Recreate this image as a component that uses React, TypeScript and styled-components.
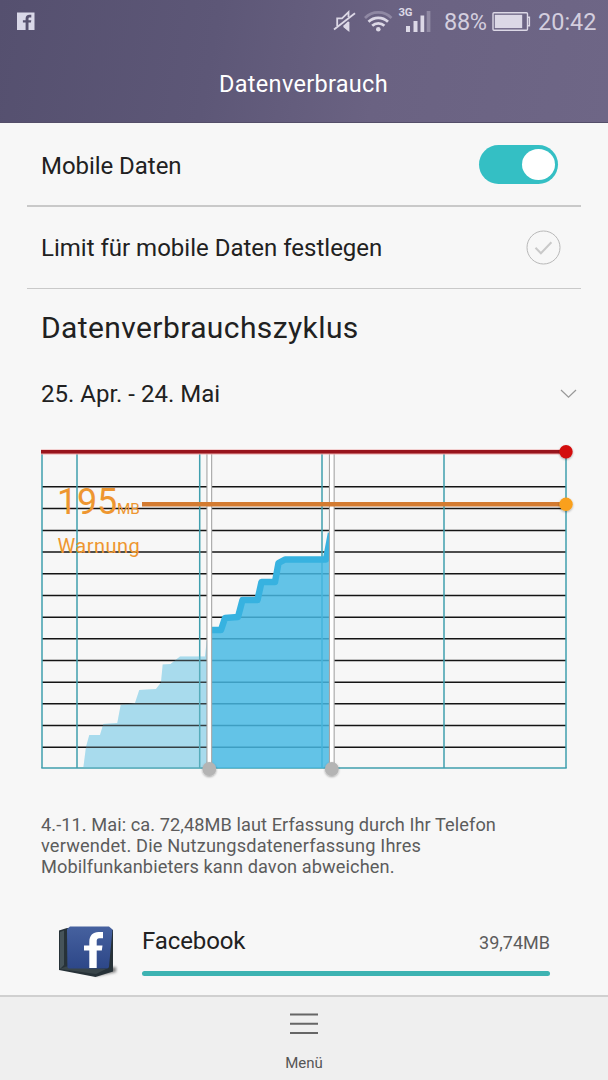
import React from 'react';
import styled, { createGlobalStyle } from 'styled-components';

const Global = createGlobalStyle`
  * { box-sizing: border-box; }
  html, body { margin: 0; padding: 0; background: #f7f7f7; }
  body { font-family: Roboto, "Liberation Sans", sans-serif; color: #212121; }
`;

const Screen = styled.div`
  width: 608px;
  height: 1080px;
  display: flex;
  flex-direction: column;
  overflow: hidden;
  background: #f7f7f7;
`;

const Header = styled.header`
  height: 123px;
  flex: none;
  color: #fff;
  background: linear-gradient(100deg, #55506f 0%, #5d5777 35%, #6a6282 62%, #6e6686 100%);
  border-bottom: 1px solid #544e69;
`;

const StatusBar = styled.div`
  height: 44px;
  display: flex;
  align-items: flex-start;
  justify-content: space-between;
`;

const StatusGroup = styled.div`
  display: flex;
  height: 44px;
`;

const StatusText = styled.span<{ $spacing?: number; $w: number }>`
  width: ${(p) => p.$w}px;
  font-size: 23.5px;
  line-height: 28px;
  padding-top: 8px;
  font-weight: 400;
  letter-spacing: ${(p) => p.$spacing ?? 0}px;
  color: #d3cede;
  white-space: nowrap;
`;

const Title = styled.h1`
  margin: 0;
  height: 78px;
  line-height: 80px;
  text-align: center;
  font-size: 23.5px;
  font-weight: 400;
  letter-spacing: 0.3px;
  padding-right: 1px;
`;

const Row = styled.div<{ $h: number; $line: number }>`
  height: ${(p) => p.$h}px;
  flex: none;
  margin: 0 27px;
  padding: 0 20px 0 14px;
  display: flex;
  align-items: center;
  justify-content: space-between;
  border-bottom: ${(p) => p.$line}px solid #c9c9c9;
`;

const Label = styled.span<{ $spacing?: number; $drop?: number }>`
  font-size: 24px;
  line-height: 28px;
  margin-top: ${(p) => p.$drop ?? 0}px;
  letter-spacing: ${(p) => p.$spacing ?? 0}px;
  white-space: nowrap;
`;

const Toggle = styled.div`
  width: 79px;
  height: 39px;
  margin-right: 3px;
  border-radius: 20px;
  padding: 3px;
  background: #34bfc4;
  display: flex;
  justify-content: flex-end;
  align-items: center;
`;

const Knob = styled.div`
  width: 33px;
  height: 31px;
  border-radius: 50%;
  background: #fff;
`;

const Heading = styled.h2`
  margin: 0;
  height: 76px;
  flex: none;
  padding: 21px 0 0 41px;
  font-size: 30px;
  line-height: 36px;
  font-weight: 400;
  letter-spacing: 0.4px;
`;

const Cycle = styled.div`
  height: 58px;
  flex: none;
  padding: 0 31px 0 41px;
  display: flex;
  align-items: center;
  justify-content: space-between;
`;

const Chart = styled.svg`
  display: block;
  flex: none;
  margin-top: 11px;
  font-family: Roboto, "Liberation Sans", sans-serif;
`;

const Summary = styled.p`
  margin: 0;
  height: 118px;
  flex: none;
  padding: 19px 0 0 41px;
  font-size: 18.2px;
  line-height: 21px;
  color: #5c5c5c;
  white-space: nowrap;
`;

const SummaryLine = styled.span<{ $spacing: number }>`
  display: block;
  letter-spacing: ${(p) => p.$spacing}px;
`;

const AppRow = styled.div`
  height: 82px;
  flex: none;
  display: flex;
  align-items: flex-start;
  padding: 0 58px 0 55px;
`;

const AppIcon = styled.svg`
  display: block;
  flex: none;
  margin-top: 7px;
`;

const AppInfo = styled.div`
  flex: 1;
  margin-left: 19px;
`;

const AppLine = styled.div`
  height: 58px;
  padding-top: 14px;
  display: flex;
  justify-content: space-between;
  align-items: baseline;
`;

const AppSize = styled.span`
  font-size: 18px;
  color: #5c5c5c;
`;

const UsageBar = styled.div`
  height: 5px;
  border-radius: 3px;
  background: #3db3b2;
`;

const Footer = styled.footer`
  flex: 1;
  display: flex;
  flex-direction: column;
  align-items: center;
  border-top: 2px solid #d0d0d0;
  background: #efefef;
  color: #555;
  font-size: 15px;
`;

const FooterLabel = styled.span`
  margin-top: 19px;
  line-height: 18px;
`;

const hLines = [486.7, 508.5, 530.5, 552, 573.7, 595.5, 617.3, 638.7, 660.5, 682.3, 703.7, 725.5, 747.3];
const vLines = [42, 77, 199.7, 322, 444, 566];
const earlierPath =
  'M83.3 768L86 747L89.3 735H100L103.3 724L117.3 723L120.7 705L135 703L139.3 690L156 689L161 682.5L162.7 664.5L170.5 664L180 656.5H205L206.7 641H209V768Z';
const selectedPath =
  'M208 630 L221 630 L225 618 L238 617 L242.5 600 L257.5 600 L261.5 582 L275 582 L278.5 563 L285 559.5 L326 559.5 L331 533';

function NotificationIcon() {
  return (
    <svg width="60" height="44" viewBox="0 0 60 44">
      <rect x="17" y="12.5" width="17.5" height="17.5" fill="#d9d8e8" />
      <path d="M25.6 30v-7.4h-2.7v-2.4h2.7v-1.4c0-2.8 1.5-4.1 3.8-4.1h1.9v2.8h-1.4c-1.1 0-1.4.5-1.4 1.4v1.3h2.8l-.4 2.4h-2.4V30z" fill="#57526f" />
    </svg>
  );
}

function SignalIcons() {
  return (
    <svg width="114" height="44" viewBox="330 0 114 44" fontFamily="Roboto, sans-serif">
      <g fill="none" stroke="#dcd8e6" strokeWidth="1.8">
        <path d="M334 29.5L355 13.2" />
        <path d="M337.2 26V18.4H342L348.5 12.2V17M348.5 22V30L343.8 26.2" />
      </g>
      <path d="M343 26l5.5-5v10z" fill="#dcd8e6" />
      <g fill="none" strokeWidth="2.7">
        <path d="M365 18a18.5 18.5 0 0 1 26.5 0" stroke="#8f88a3" />
        <path d="M368.5 21.8a14 14 0 0 1 19.5 0" stroke="#dcd8e6" />
        <path d="M372.2 25.8a8.8 8.8 0 0 1 12.2 0" stroke="#dcd8e6" />
      </g>
      <circle cx="378.3" cy="29.3" r="2.3" fill="#dcd8e6" />
      <text x="398.4" y="16" fontSize="11.3" fontWeight="700" fill="#dcd8e6">3G</text>
      <g fill="#dcd8e6">
        <rect x="406" y="26" width="4" height="6" />
        <rect x="413.5" y="21" width="4" height="11" />
        <rect x="420.5" y="15.5" width="3.7" height="16.5" />
        <rect x="426.7" y="11" width="3.7" height="21" fill="#9089a3" />
      </g>
    </svg>
  );
}

function BatteryIcon() {
  return (
    <svg width="50" height="44" viewBox="488 0 50 44">
      <rect x="493" y="12.8" width="34.5" height="17.4" rx="1" fill="none" stroke="#dcd8e6" strokeWidth="1.4" />
      <rect x="494.8" y="14.8" width="27.4" height="13.3" fill="#dcd8e6" />
      <path d="M528 17.3h1.4v8.4H528" fill="none" stroke="#dcd8e6" strokeWidth="1.4" />
    </svg>
  );
}

function CheckCircle() {
  return (
    <svg width="35" height="35" viewBox="0 0 35 35" fill="none">
      <circle cx="17.5" cy="17.5" r="16.5" stroke="#b8b8b8" strokeWidth="1" />
      <path d="M9.5 17.8l5.4 5.5 10.5-11" stroke="#c9c9c9" strokeWidth="2" />
    </svg>
  );
}

function UsageChart() {
  return (
    <Chart width="608" height="361" viewBox="0 434 608 361">
      <defs>
        <filter id="soft" x="-40%" y="-40%" width="180%" height="180%">
          <feDropShadow dx="0" dy="1" stdDeviation="1" floodColor="#000" floodOpacity="0.35" />
        </filter>
      </defs>
      <path d={earlierPath} fill="#a8dced" />
      {hLines.map((y) => (
        <path key={y} d={`M42 ${y}H566`} stroke="#141414" strokeWidth="1.5" />
      ))}
      {vLines.map((x) => (
        <path key={x} d={`M${x} 453V768`} stroke="#3f9fae" strokeWidth="1.5" />
      ))}
      <path d="M41.3 768H566.7" stroke="#3f9fae" strokeWidth="1.6" />
      <path d={earlierPath} fill="#a8dced" fillOpacity="0.22" />
      <path d={`${selectedPath}V768H208Z`} fill="#46b9e3" fillOpacity="0.84" />
      <path d={selectedPath} fill="none" stroke="#37b2e0" strokeWidth="6.5" strokeLinejoin="round" />
      <g fill="#ee9630">
        <text x="57" y="514" fontSize="36" letterSpacing="-0.2">195</text>
        <text x="117" y="514" fontSize="15.3">MB</text>
        <text x="57.5" y="552.5" fontSize="20" letterSpacing="0.45">Warnung</text>
      </g>
      {[209.3, 331.8].map((x) => (
        <g key={x}>
          <rect x={x - 2.9} y="453" width="5.8" height="312" fill="#a5a5a5" />
          <rect x={x - 1.8} y="453" width="3.6" height="312" fill="#fff" />
          <circle cx={x} cy="769" r="6.9" fill="#b4b4b4" filter="url(#soft)" />
        </g>
      ))}
      <path d="M41 452H566" stroke="#eda7a7" strokeWidth="5" />
      <path d="M41 451.7H566" stroke="#98141c" strokeWidth="3.4" />
      <circle cx="566" cy="451.8" r="6.7" fill="#d3100f" filter="url(#soft)" />
      <path d="M142 504.3H566" stroke="#d37b31" strokeWidth="4.4" />
      <circle cx="566" cy="504.2" r="6.7" fill="#faa01a" filter="url(#soft)" />
    </Chart>
  );
}

function FacebookIcon() {
  return (
    <AppIcon width="68" height="60" viewBox="55 920 68 60">
      <defs>
        <linearGradient id="tile" x1="0" y1="0" x2="0" y2="1">
          <stop offset="0" stopColor="#46619f" />
          <stop offset="1" stopColor="#2d4788" />
        </linearGradient>
        <filter id="cast" x="-30%" y="-100%" width="160%" height="300%">
          <feGaussianBlur stdDeviation="1.6" />
        </filter>
      </defs>
      <path d="M96 976L116 972L116 967L90 970Z" fill="#777" filter="url(#cast)" />
      <path d="M59 930.5L67 928L108 928L113 930V971.5L95.5 977L59 970Z" fill="#273238" />
      <path d="M60 932L64 930.5V965L60 969Z" fill="#46545a" />
      <path d="M60 969L66 966.5L106 969L96 974Z" fill="#39454a" />
      <path d="M67 929L70 926.5H109L112.5 929.5L109 966.5Q108.8 968.5 107 968.5H69Q67.5 968.5 67.4 966.5Z" fill="url(#tile)" />
      <path
        d="M89.3 968V950.5H84V945.5H89.3V942C89.3 935.4 93 932 98.5 932H103V938.3H99.5C97 938.3 96.7 939.6 96.7 941.5V945.5H102.5L101.8 950.5H96.7V968Z"
        fill="#fff"
      />
    </AppIcon>
  );
}

export default function App() {
  return (
    <Screen>
      <Global />
      <Header>
        <StatusBar>
          <NotificationIcon />
          <StatusGroup>
            <SignalIcons />
            <StatusText $w={44} $spacing={-0.3}>88%</StatusText>
            <BatteryIcon />
            <StatusText $w={70}>20:42</StatusText>
          </StatusGroup>
        </StatusBar>
        <Title>Datenverbrauch</Title>
      </Header>
      <Row $h={84} $line={2}>
        <Label $drop={4} $spacing={-0.05}>Mobile Daten</Label>
        <Toggle><Knob /></Toggle>
      </Row>
      <Row $h={82} $line={1.5}>
        <Label $drop={1}>Limit für mobile Daten festlegen</Label>
        <CheckCircle />
      </Row>
      <Heading>Datenverbrauchszyklus</Heading>
      <Cycle>
        <Label>25. Apr. - 24. Mai</Label>
        <svg width="17" height="10" viewBox="0 0 17 10" fill="none">
          <path d="M1 1l7.5 7.2L16 1" stroke="#999" strokeWidth="1.2" />
        </svg>
      </Cycle>
      <UsageChart />
      <Summary>
        <SummaryLine $spacing={0.07}>4.-11. Mai: ca. 72,48MB laut Erfassung durch Ihr Telefon</SummaryLine>
        <SummaryLine $spacing={0.17}>verwendet. Die Nutzungsdatenerfassung Ihres</SummaryLine>
        <SummaryLine $spacing={0.09}>Mobilfunkanbieters kann davon abweichen.</SummaryLine>
      </Summary>
      <AppRow>
        <FacebookIcon />
        <AppInfo>
          <AppLine>
            <Label $spacing={-0.1}>Facebook</Label>
            <AppSize>39,74MB</AppSize>
          </AppLine>
          <UsageBar />
        </AppInfo>
      </AppRow>
      <Footer>
        <svg width="30" height="38" viewBox="0 0 30 38">
          <path d="M1 17.5H29M1 26.7H29M1 36H29" stroke="#666" strokeWidth="2" />
        </svg>
        <FooterLabel>Menü</FooterLabel>
      </Footer>
    </Screen>
  );
}
